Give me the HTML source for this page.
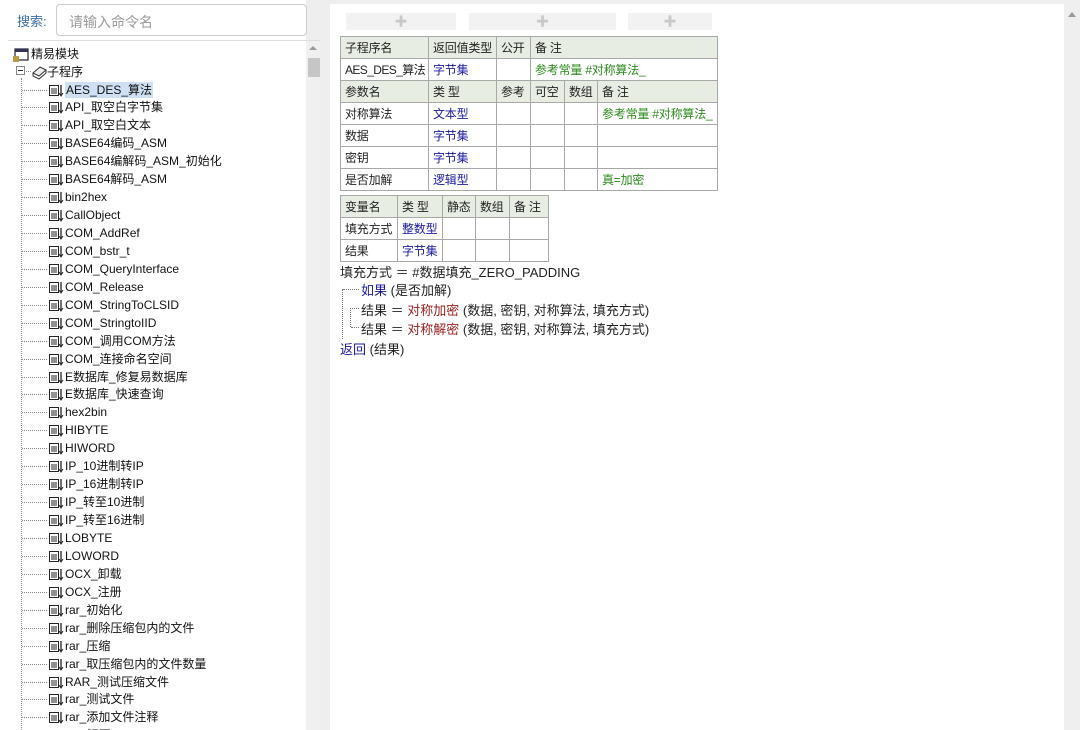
<!DOCTYPE html>
<html><head><meta charset="utf-8"><style>
*{box-sizing:border-box;margin:0;padding:0}
html,body{overflow:hidden}
body{width:1080px;height:730px;background:#eeeeee;font-family:"Liberation Sans","Noto Sans CJK SC",sans-serif;position:relative;color:#222}
#left{position:absolute;left:0;top:0;width:306px;height:730px;background:#fff}
#lbl{position:absolute;left:17px;top:11px;font-size:13px;color:#3a6ea5}
#inp{position:absolute;left:56px;top:4px;width:251px;height:32px;border:1px solid #ccc;border-radius:4px;font-size:14px;color:#999;padding:7px 12px;background:#fff}
#tree{position:absolute;left:8px;top:40px;width:312px;height:690px;border-top:1px solid #ddd;overflow:hidden}
#sb{position:absolute;left:306px;top:41px;width:14px;height:689px;background:#f0f0f0}
#thumb{position:absolute;left:308px;top:58px;width:12px;height:19px;background:#c6c6c6}
.arrow{position:absolute;left:309px;top:46px;width:0;height:0;border-left:4px solid transparent;border-right:4px solid transparent;border-bottom:4px solid #999}
.ti{position:absolute;left:65px;font-size:12px;line-height:16px;white-space:nowrap;color:#111}
.ic{position:absolute;left:48px;width:16px;height:16px}
.hd{position:absolute;left:22px;width:25px;border-top:1px dotted #888}
#vl{position:absolute;left:21px;top:78px;height:652px;border-left:1px dotted #888}
#right{position:absolute;left:330px;top:4px;width:734px;height:726px;background:#fff}
#rsb{position:absolute;left:1064px;top:0;width:16px;height:730px;background:#efefef}
.btn{position:absolute;top:13px;height:17px;background:#f2f2f2;text-align:center;color:#c8c8c8;font-size:13px;line-height:17px}
table{position:absolute;border-collapse:collapse;font-size:12px;table-layout:fixed}
td{border:1px solid #a8a8a8;height:22px;padding:0 4px;white-space:nowrap;overflow:hidden;letter-spacing:-0.2px}
tr.h td{background:#e8ede3}
.b{color:#1a1aa0}.g{color:#2a8a1a}.r{color:#9b2020}
.code{position:absolute;left:340px;font-size:13px;white-space:nowrap;color:#222}
</style></head><body>
<div id="left"></div>
<div id="lbl">搜索:</div>
<div id="inp">请输入命令名</div>
<div id="tree"></div>
<div id="sb"></div><div class="arrow"></div><div id="thumb"></div>
<div id="vl"></div>
<svg style="position:absolute;left:13px;top:47px" width="16" height="16"><rect x="2" y="2" width="13" height="11" fill="#fff" stroke="#223" stroke-width="1.2"/><rect x="2" y="2" width="13" height="3" fill="#335"/><rect x="0" y="9" width="6" height="6" fill="#b89a40"/></svg>
<div class="ti" style="left:31px;top:46px">精易模块</div>
<svg style="position:absolute;left:16px;top:66px" width="10" height="10"><rect x="0.5" y="0.5" width="8" height="8" fill="#fff" stroke="#888"/><line x1="2" y1="4.5" x2="7" y2="4.5" stroke="#333"/></svg>
<div style="position:absolute;left:26px;top:71px;width:5px;border-top:1px dotted #888"></div>
<svg style="position:absolute;left:31px;top:64px" width="16" height="16"><path d="M2 9 L9 3 L15 6 L8 12 Z" fill="#eee" stroke="#333"/><path d="M2 9 L2 12 L8 15 L15 9 L15 6" fill="none" stroke="#333"/></svg>
<div class="ti" style="left:47px;top:64px">子程序</div>
<div id="items"></div>
<div id="right"></div>
<div id="rsb"></div>
<div style="position:absolute;left:1068px;top:12px;border-left:4px solid transparent;border-right:4px solid transparent;border-bottom:5px solid #999"></div>
<div class="btn" style="left:346px;width:110px">✚</div>
<div class="btn" style="left:469px;width:147px">✚</div>
<div class="btn" style="left:628px;width:84px">✚</div>
<table style="left:340px;top:36px;width:377px">
<colgroup><col style="width:88px"><col style="width:68px"><col style="width:34px"><col style="width:34px"><col style="width:33px"><col style="width:120px"></colgroup>
<tr class="h"><td>子程序名</td><td>返回值类型</td><td>公开</td><td colspan="3">备 注</td></tr>
<tr><td style="letter-spacing:-0.6px">AES_DES_算法</td><td class="b">字节集</td><td></td><td colspan="3" class="g">参考常量 #对称算法_</td></tr>
<tr class="h"><td>参数名</td><td>类 型</td><td>参考</td><td>可空</td><td>数组</td><td>备 注</td></tr>
<tr><td>对称算法</td><td class="b">文本型</td><td></td><td></td><td></td><td class="g">参考常量 #对称算法_</td></tr>
<tr><td>数据</td><td class="b">字节集</td><td></td><td></td><td></td><td></td></tr>
<tr><td>密钥</td><td class="b">字节集</td><td></td><td></td><td></td><td></td></tr>
<tr><td>是否加解</td><td class="b">逻辑型</td><td></td><td></td><td></td><td class="g">真=加密</td></tr>
</table>
<table style="left:340px;top:195px;width:208px">
<colgroup><col style="width:57px"><col style="width:45px"><col style="width:33px"><col style="width:34px"><col style="width:39px"></colgroup>
<tr class="h"><td>变量名</td><td>类 型</td><td>静态</td><td>数组</td><td>备 注</td></tr>
<tr><td>填充方式</td><td class="b">整数型</td><td></td><td></td><td></td></tr>
<tr><td>结果</td><td class="b">字节集</td><td></td><td></td><td></td></tr>
</table>
<div class="code" style="top:262px">填充方式 ＝ #数据填充_ZERO_PADDING</div>
<div class="code" style="top:280px;left:361px"><span class="b">如果</span> (是否加解)</div>
<div class="code" style="top:300px;left:361px">结果 ＝ <span class="r">对称加密</span> (数据, 密钥, 对称算法, 填充方式)</div>
<div class="code" style="top:319px;left:361px">结果 ＝ <span class="r">对称解密</span> (数据, 密钥, 对称算法, 填充方式)</div>
<div class="code" style="top:339px"><span class="b">返回</span> (结果)</div>
<div style="position:absolute;left:342px;top:289px;height:50px;border-left:1px dotted #777"></div>
<div style="position:absolute;left:343px;top:289px;width:16px;border-top:1px dotted #777"></div>
<div style="position:absolute;left:350px;top:308px;width:9px;border-top:1px dotted #777"></div>
<div style="position:absolute;left:350px;top:308px;height:19px;border-left:1px dotted #777"></div>
<div style="position:absolute;left:351px;top:327px;width:8px;border-top:1px dotted #777"></div>
<script>
var n=["AES_DES_算法","API_取空白字节集","API_取空白文本","BASE64编码_ASM","BASE64编解码_ASM_初始化","BASE64解码_ASM","bin2hex","CallObject","COM_AddRef","COM_bstr_t","COM_QueryInterface","COM_Release","COM_StringToCLSID","COM_StringtoIID","COM_调用COM方法","COM_连接命名空间","E数据库_修复易数据库","E数据库_快速查询","hex2bin","HIBYTE","HIWORD","IP_10进制转IP","IP_16进制转IP","IP_转至10进制","IP_转至16进制","LOBYTE","LOWORD","OCX_卸载","OCX_注册","rar_初始化","rar_删除压缩包内的文件","rar_压缩","rar_取压缩包内的文件数量","RAR_测试压缩文件","rar_测试文件","rar_添加文件注释","rar_解压"];
var h="";
for(var i=0;i<n.length;i++){var y=81.5+i*17.94;
h+='<div class="hd" style="top:'+(y+8)+'px"></div>';
h+='<svg class="ic" style="top:'+y+'px" viewBox="0 0 16 16"><rect x="1.5" y="3.5" width="9" height="10" fill="#fff" stroke="#222"/><line x1="3" y1="7" x2="9" y2="7" stroke="#222"/><line x1="3" y1="9" x2="9" y2="9" stroke="#222"/><line x1="3" y1="11" x2="9" y2="11" stroke="#222"/><line x1="13" y1="3" x2="13" y2="13" stroke="#222" stroke-width="1.3"/><path d="M11 11 L13 14 L15 11" fill="none" stroke="#222"/></svg>';
h+='<div class="ti" style="top:'+y+'px'+(i==0?';background:#cfe0f5;padding:0 1px':'')+'">'+n[i]+'</div>';}
document.getElementById("items").innerHTML=h;
</script>
</body></html>
